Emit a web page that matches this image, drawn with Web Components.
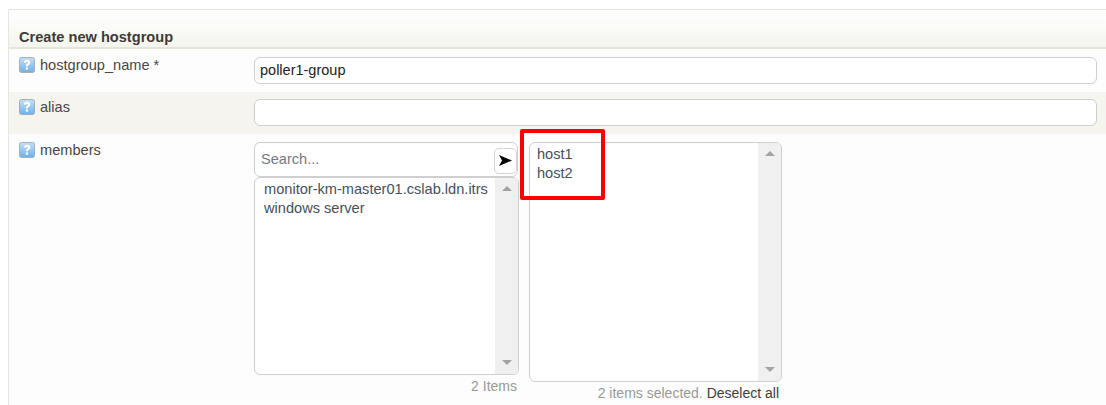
<!DOCTYPE html>
<html>
<head>
<meta charset="utf-8">
<title>Create new hostgroup</title>
<style>
  html, body { margin: 0; height: 405px; overflow: hidden; background: #fff; }
  body { font: 14.6px "Liberation Sans", Arial, sans-serif; color: #444; }
</style>
</head>
<body>
<form-panel heading="Create new hostgroup">
  <form-row label="hostgroup_name *"><text-field value="poller1-group"></text-field></form-row>
  <form-row label="alias" shaded><text-field></text-field></form-row>
  <form-row label="members" tall>
    <dual-select>
      <div slot="available">monitor-km-master01.cslab.ldn.itrs</div>
      <div slot="available">windows server</div>
      <div slot="selected">host1</div>
      <div slot="selected">host2</div>
    </dual-select>
  </form-row>
</form-panel>
<script>
class FormPanel extends HTMLElement {
  constructor() {
    super();
    this.attachShadow({ mode: 'open' });
    this.shadowRoot.innerHTML = `
      <style>
        :host {
          display: block;
          margin: 9px 0 0 8px;
          width: 1110px;
          border: solid #e6e6de;
          border-width: 1px 1px 0 1px;
          background: #fdfdfd;
        }
        header {
          box-sizing: border-box;
          height: 39px;
          padding: 19px 0 0 10px;
          font-weight: bold;
          line-height: 16px;
          color: #3f3a36;
          background: linear-gradient(#fff, #f5f5ef);
          border-bottom: 2px solid #e4e5d8;
        }
      </style>
      <header></header>
      <slot></slot>
    `;
  }

  connectedCallback() {
    this.shadowRoot.querySelector('header').textContent = this.getAttribute('heading');
  }
}

class FormRow extends HTMLElement {
  constructor() {
    super();
    this.attachShadow({ mode: 'open' });
    this.shadowRoot.innerHTML = `
      <style>
        :host {
          display: grid;
          grid-template-columns: 245px 843px;
          box-sizing: border-box;
          height: 43px;
          padding-top: 8px;
          background: #fdfdfd;
        }
        :host([shaded]) { background: #f5f4ef; height: 42px; padding-top: 7px; }
        :host([tall]) { height: 271px; }
        .label {
          display: flex;
          align-items: flex-start;
          gap: 5px;
          padding-left: 10px;
          line-height: 16px;
          color: #4a4643;
        }
        svg { flex: none; }
      </style>
      <div class="label">
        <svg width="16" height="16" viewBox="0 0 16 16">
          <defs>
            <linearGradient id="help" x1="0" y1="0" x2="0" y2="1">
              <stop offset="0" stop-color="#c4e0f7"/>
              <stop offset="1" stop-color="#6eb0e8"/>
            </linearGradient>
          </defs>
          <rect x="0.5" y="0.5" width="15" height="15" rx="2" fill="url(#help)" stroke="#a3aeb6"/>
          <path d="M4.800 5.600C5 3.700 6.300 2.800 8.100 2.800c2 0 3.200 1.100 3.200 2.600 0 1.200-.7 1.800-1.500 2.400-.6.400-.8.700-.8 1.400H6.800c0-1.100.3-1.700 1.100-2.300.6-.5 1-.8 1-1.300 0-.6-.3-.9-.9-.9-.6 0-1 .4-1.100 1.100z" fill="#fff"/>
          <rect x="6.800" y="10.400" width="2.200" height="2.200" fill="#fff"/>
        </svg>
        <span></span>
      </div>
      <div><slot></slot></div>
    `;
  }

  connectedCallback() {
    this.shadowRoot.querySelector('span').textContent = this.getAttribute('label');
  }
}

class TextField extends HTMLElement {
  constructor() {
    super();
    this.attachShadow({ mode: 'open' });
    this.shadowRoot.innerHTML = `
      <style>
        :host { display: block; }
        input {
          display: block;
          box-sizing: border-box;
          width: 100%;
          height: 27px;
          padding: 0 5px 1px;
          border: 1px solid #cfcfcf;
          border-radius: 6px;
          background: #fff;
          font: 14.5px "Liberation Sans", Arial, sans-serif;
          color: #222;
          outline: none;
        }
      </style>
      <input type="text">
    `;
  }

  connectedCallback() {
    this.shadowRoot.querySelector('input').value = this.getAttribute('value') || '';
  }
}

class ListBox extends HTMLElement {
  constructor() {
    super();
    this.attachShadow({ mode: 'open' });
    this.shadowRoot.innerHTML = `
      <style>
        :host {
          display: flex;
          box-sizing: border-box;
          border: 1px solid #cfcfcf;
          border-radius: 6px;
          background: #fff;
          overflow: hidden;
          line-height: 19px;
          color: #46505a;
        }
        .items {
          flex: 1;
          min-width: 0;
          padding: var(--list-pad, 1px 0 0 7px);
          white-space: nowrap;
          overflow: hidden;
        }
        .bar {
          flex: none;
          width: 23px;
          display: flex;
          flex-direction: column;
          justify-content: space-between;
          align-items: center;
          padding: 8px 0 9px;
          background: #f0f0f0;
        }
        .up, .down { width: 0; height: 0; border: 5px solid transparent; }
        .up { border-top: 0; border-bottom: 5px solid #a3a3a3; }
        .down { border-bottom: 0; border-top: 5px solid #a3a3a3; }
      </style>
      <div class="items"><slot></slot></div>
      <div class="bar"><i class="up"></i><i class="down"></i></div>
    `;
  }
}

class DualSelect extends HTMLElement {
  constructor() {
    super();
    this.attachShadow({ mode: 'open' });
    this.shadowRoot.innerHTML = `
      <style>
        :host {
          display: grid;
          grid-template-columns: 265px 253px;
          column-gap: 10px;
          align-items: start;
        }
        .search {
          display: flex;
          align-items: center;
          box-sizing: border-box;
          width: 264px;
          height: 35px;
          padding: 0 0 0 6px;
          border: 1px solid #cfcfcf;
          border-radius: 6px;
          background: #fff;
        }
        input {
          flex: 1;
          min-width: 0;
          padding: 0 0 2px;
          border: 0;
          outline: none;
          background: none;
          font: 14.6px "Liberation Sans", Arial, sans-serif;
        }
        input::placeholder { color: #77797c; opacity: 1; }
        button {
          box-sizing: border-box;
          width: 23px;
          height: 26px;
          margin-top: 2px;
          padding: 0;
          display: flex;
          align-items: center;
          justify-content: center;
          border: 1px solid #d4d4d4;
          border-radius: 5px;
          background: #fff;
        }
        .left list-box { height: 198px; --list-pad: 2px 0 0 9px; }
        .right list-box { height: 240px; --list-pad: 2px 0 0 7px; }
        .note {
          padding-right: 3px;
          text-align: right;
          font-size: 14px;
          line-height: 16px;
          color: #999;
        }
        .left .note { margin-top: 3px; padding-right: 2px; }
        .right .note { margin-top: 3px; }
        .note span { color: #3f3a36; }
      </style>
      <div class="left">
        <div class="search">
          <input type="text" placeholder="Search...">
          <button type="button" aria-label="Go">
            <svg width="13" height="11" viewBox="0 0 13 11"><path d="M0 0L13 5.500 0 11 3 5.500z" fill="#000"/></svg>
          </button>
        </div>
        <list-box><slot name="available"></slot></list-box>
        <div class="note">2 Items</div>
      </div>
      <div class="right">
        <list-box><slot name="selected"></slot></list-box>
        <div class="note">2 items selected. <span>Deselect all</span></div>
      </div>
      <red-callout></red-callout>
    `;
  }
}

// the red box drawn over the screenshot, it sits on top of the selected list
class RedCallout extends HTMLElement {
  constructor() {
    super();
    this.attachShadow({ mode: 'open' });
    this.shadowRoot.innerHTML = `
      <style>
        :host {
          position: fixed;
          left: 520px;
          top: 129px;
          width: 85px;
          height: 71px;
          box-sizing: border-box;
          border: 4px solid #f00;
          border-radius: 2px;
          pointer-events: none;
        }
      </style>
    `;
  }
}

customElements.define('form-panel', FormPanel);
customElements.define('form-row', FormRow);
customElements.define('text-field', TextField);
customElements.define('list-box', ListBox);
customElements.define('dual-select', DualSelect);
customElements.define('red-callout', RedCallout);
</script>
</body>
</html>
